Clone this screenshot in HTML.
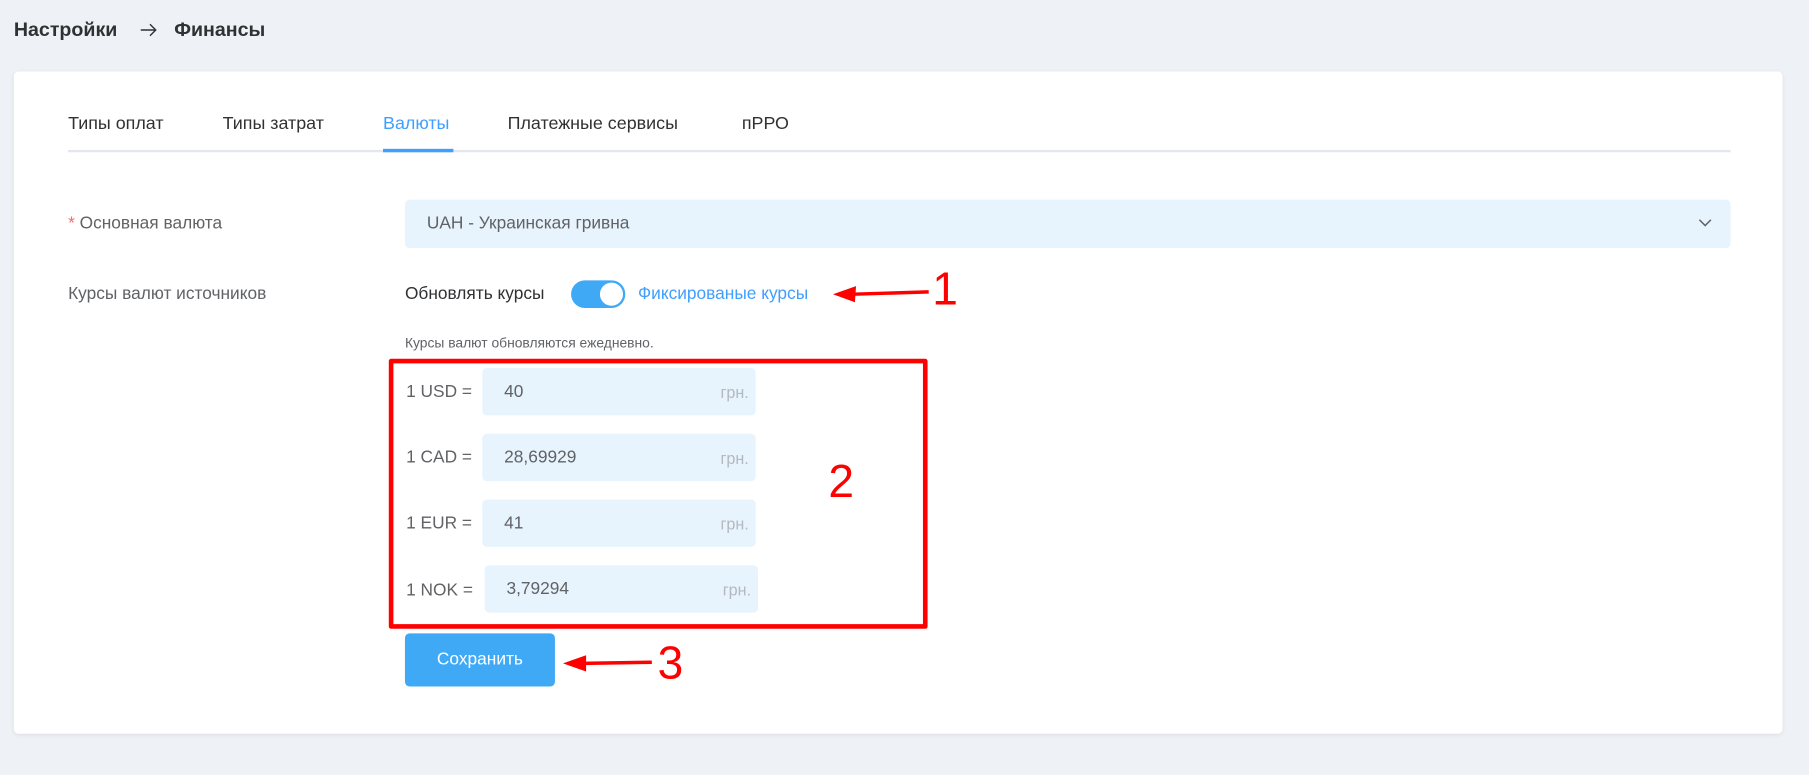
<!DOCTYPE html>
<html><head><meta charset="utf-8">
<style>
html,body{margin:0;padding:0;width:1809px;height:775px;overflow:hidden;background:#eef2f6;}
#w{position:absolute;left:0;top:0;width:1568px;height:672px;transform:scale(1.1537);transform-origin:0 0;font-family:"Liberation Sans",Arial,sans-serif;color:#303133;}
.a{position:absolute;white-space:nowrap;}
.card{position:absolute;left:12px;top:62px;width:1533px;height:574px;background:#fff;border-radius:4px;box-shadow:0 1px 4px rgba(0,0,0,.08);}
.tab{font-size:15.5px;color:#303133;top:99px;}
.inp{position:absolute;background:#e8f4fd;border-radius:4px;height:41px;width:237px;}
.inp span{position:absolute;left:19px;top:12px;font-size:15px;color:#606266;}
.inp i{position:absolute;right:6px;top:13px;font-style:normal;font-size:14px;color:#b4b8bf;}
.lbl{font-size:15px;color:#606266;}
</style></head><body><div id="w">
<div class="a" style="left:12px;top:16px;font-size:17px;font-weight:bold;color:#303133;">Настройки</div>
<svg class="a" style="left:121px;top:19px;" width="16" height="14" viewBox="0 0 16 14"><path d="M1 7h13M9 2l5 5-5 5" fill="none" stroke="#303133" stroke-width="1.2"/></svg>
<div class="a" style="left:151px;top:16px;font-size:17px;font-weight:bold;color:#303133;">Финансы</div>
<div class="card"></div>
<div class="a tab" style="left:59px;">Типы оплат</div>
<div class="a tab" style="left:193px;">Типы затрат</div>
<div class="a tab" style="left:332px;color:#409eff;">Валюты</div>
<div class="a tab" style="left:440px;">Платежные сервисы</div>
<div class="a tab" style="left:643px;">пРРО</div>
<div class="a" style="left:59px;top:130px;width:1441px;height:2px;background:#e4e7ed;"></div>
<div class="a" style="left:332px;top:129px;width:61px;height:3px;background:#409eff;"></div>

<div class="a lbl" style="left:59px;top:185px;"><span style="color:#f56c6c;">*</span> Основная валюта</div>
<div class="a" style="left:351px;top:173px;width:1149px;height:42px;background:#e8f4fd;border-radius:4px;"></div>
<div class="a" style="left:370px;top:185px;font-size:15px;color:#606266;">UAH - Украинская гривна</div>
<svg class="a" style="left:1472px;top:189px;" width="12" height="8" viewBox="0 0 12 8"><path d="M1 1.5l5 5 5-5" fill="none" stroke="#606266" stroke-width="1.3"/></svg>

<div class="a lbl" style="left:59px;top:246px;">Курсы валют источников</div>
<div class="a" style="left:351px;top:246px;font-size:15px;color:#303133;">Обновлять курсы</div>
<div class="a" style="left:495px;top:243px;width:47px;height:24px;border-radius:12px;background:#3fa9f5;"></div>
<div class="a" style="left:520px;top:245px;width:20px;height:20px;border-radius:50%;background:#fff;"></div>
<div class="a" style="left:553px;top:246px;font-size:15px;color:#409eff;">Фиксированые курсы</div>
<div class="a" style="left:351px;top:290px;font-size:12px;color:#606266;">Курсы валют обновляются ежедневно.</div>

<div class="a lbl" style="left:352px;top:331px;">1 USD =</div>
<div class="inp" style="left:418px;top:319px;"><span>40</span><i>грн.</i></div>
<div class="a lbl" style="left:352px;top:388px;">1 CAD =</div>
<div class="inp" style="left:418px;top:376px;"><span>28,69929</span><i>грн.</i></div>
<div class="a lbl" style="left:352px;top:445px;">1 EUR =</div>
<div class="inp" style="left:418px;top:433px;"><span>41</span><i>грн.</i></div>
<div class="a lbl" style="left:352px;top:503px;">1 NOK =</div>
<div class="inp" style="left:420px;top:490px;"><span>3,79294</span><i>грн.</i></div>

<div class="a" style="left:337px;top:311px;width:459px;height:226px;border:4px solid #ff0000;border-radius:2px;"></div>

<div class="a" style="left:351px;top:549px;width:130px;height:46px;background:#3fa9f5;border-radius:4px;color:#fff;font-size:15px;text-align:center;line-height:46px;">Сохранить</div>

<svg class="a" style="left:0;top:0;" width="1568" height="672">
<path d="M805 253 L740 255" stroke="#f00" stroke-width="3" fill="none"/>
<path d="M722 255 L742 248 L741 262 Z" fill="#f00"/>
<path d="M565 574 L505 575" stroke="#f00" stroke-width="3" fill="none"/>
<path d="M488 575 L508 568 L508 582 Z" fill="#f00"/>
</svg>
<div class="a" style="left:808px;top:229px;font-size:40px;color:#f00;">1</div>
<div class="a" style="left:718px;top:396px;font-size:40px;color:#f00;">2</div>
<div class="a" style="left:570px;top:553px;font-size:40px;color:#f00;">3</div>
</div></body></html>
